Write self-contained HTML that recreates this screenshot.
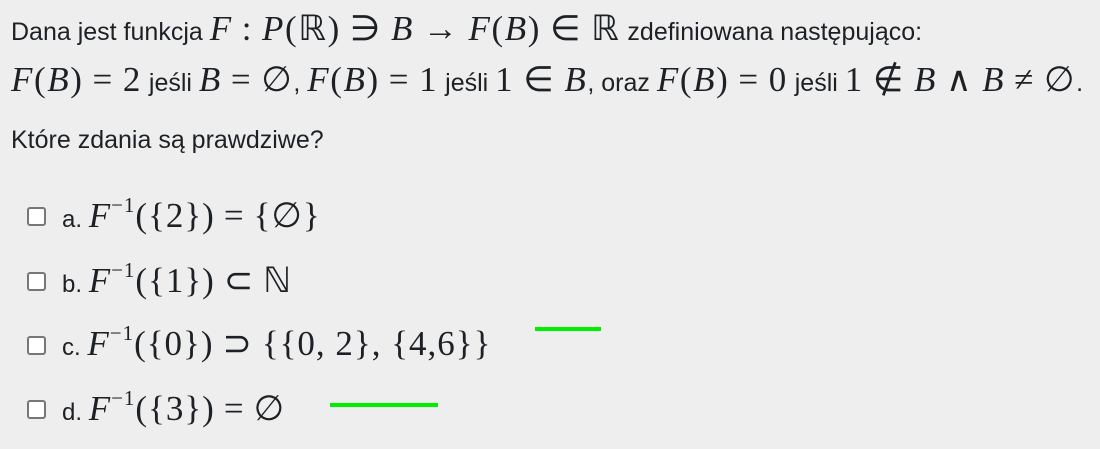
<!DOCTYPE html>
<html><head><meta charset="utf-8"><style>
body{margin:0;width:1100px;height:449px;background:#eeeeee;position:relative;overflow:hidden;font-family:"Liberation Sans",sans-serif;color:#1d2125}
.l{position:absolute;left:11px;white-space:nowrap;font-size:25px;line-height:40px}
.m{font-family:"Liberation Serif",serif;font-size:35px;letter-spacing:1px}
.l .m{letter-spacing:1.6px}
.m b{font-weight:normal;padding:0 9px}
i{font-family:"Liberation Serif",serif;font-style:italic}
sup{font-size:21px;vertical-align:15px;line-height:0}
.cb{position:absolute;left:27px;width:15px;height:15px;border:2px solid #777;border-radius:3px;background:#fff}
.o{position:absolute;left:62px;white-space:nowrap;font-size:24px;line-height:40px}
.g{position:absolute;height:4px;background:#00ee00}
</style></head><body>
<div class="l" style="top:9px">Dana jest funkcja <span class="m"><i>F</i><b>:</b><i>P</i>(ℝ)<b>∋</b><i>B</i><b>→</b><i>F</i>(<i>B</i>)<b>∈</b>ℝ</span> zdefiniowana następująco:</div>
<div class="l" style="top:60px"><span class="m"><i>F</i>(<i>B</i>)<b>=</b>2</span> jeśli <span class="m"><i>B</i><b>=</b>∅</span>, <span class="m"><i>F</i>(<i>B</i>)<b>=</b>1</span> jeśli <span class="m">1<b>∈</b><i>B</i></span>, oraz <span class="m"><i>F</i>(<i>B</i>)<b>=</b>0</span> jeśli <span class="m">1<b>∉</b><i>B</i><b>∧</b><i>B</i><b>≠</b>∅</span>.</div>
<div class="l" style="top:120px">Które zdania są prawdziwe?</div>
<div class="cb" style="top:207px"></div><div class="o" style="top:196px">a. <span class="m"><i>F</i><sup>−1</sup>({2})<b>=</b>{∅}</span></div>
<div class="cb" style="top:272px"></div><div class="o" style="top:261px">b. <span class="m"><i>F</i><sup>−1</sup>({1})<b>⊂</b>ℕ</span></div>
<div class="cb" style="top:336px"></div><div class="o" style="top:324px">c. <span class="m"><i>F</i><sup>−1</sup>({0})<b>⊃</b>{{0,&nbsp;2},&nbsp;{4,6}}</span></div>
<div class="cb" style="top:400px"></div><div class="o" style="top:389px">d. <span class="m"><i>F</i><sup>−1</sup>({3})<b>=</b>∅</span></div>
<div class="g" style="left:535px;top:327px;width:66px"></div>
<div class="g" style="left:330px;top:403px;width:108px"></div>
</body></html>
